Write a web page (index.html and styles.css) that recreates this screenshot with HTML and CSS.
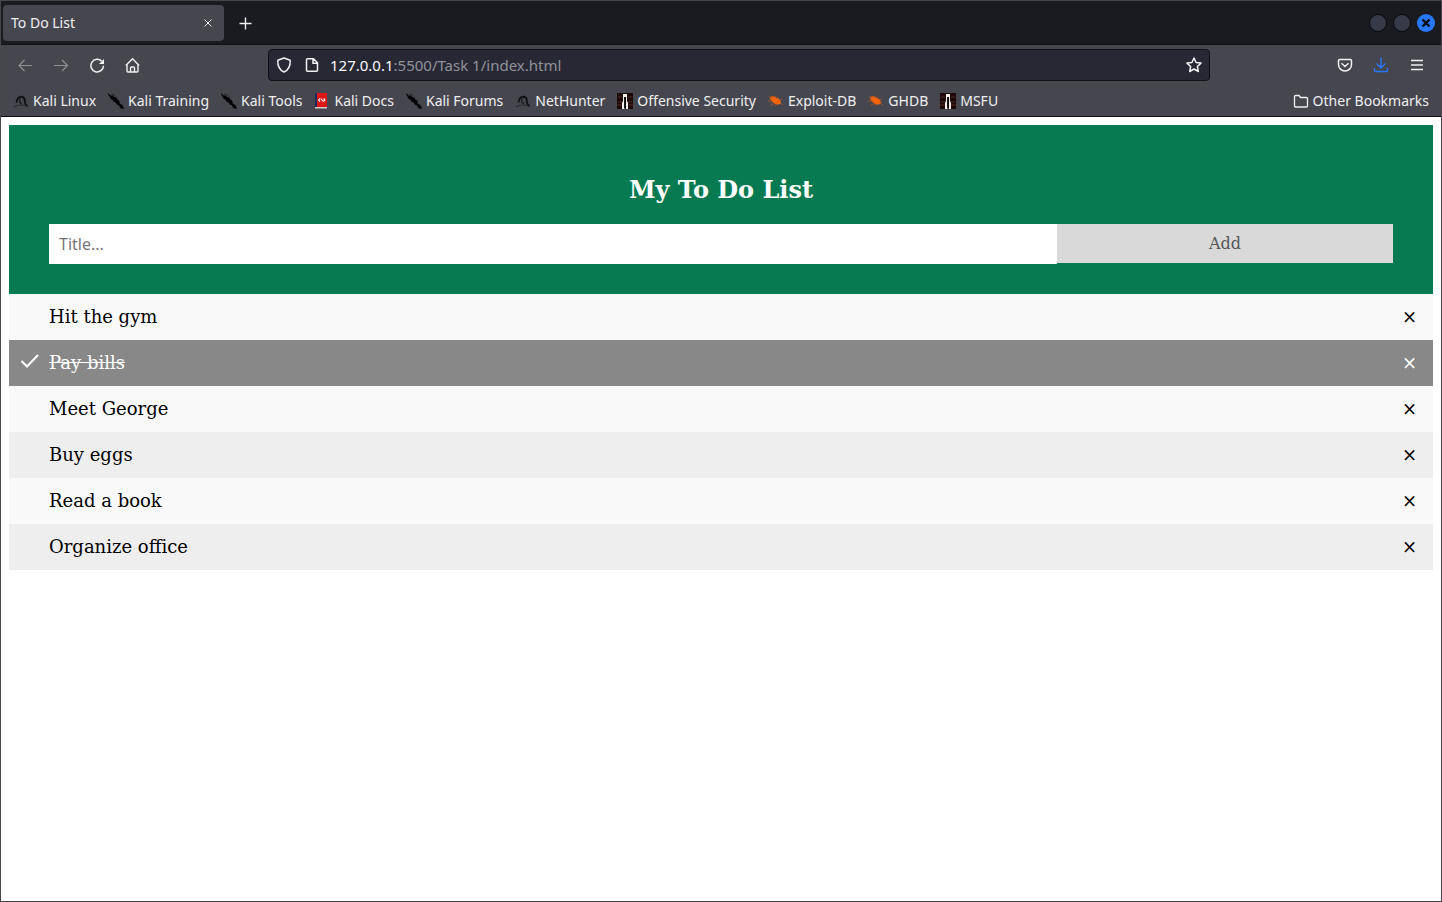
FILE: index.html
```html
<!DOCTYPE html>
<html lang="en">
<head>
<meta charset="utf-8">
<title>To Do List</title>
<link rel="stylesheet" href="styles.css">
</head>
<body>
<svg class="defs" aria-hidden="true">
  <symbol id="dragon" viewBox="0 0 16 16"><path d="M3.500 9.500C4 6 6 3.500 8.500 3.700c2.500.3 3.500 2.500 3.300 5 0 2 .7 3 2.700 4.300" fill="none" stroke="#101114" stroke-width="1.900"/><path d="M7 5.500 6.800 9l2.200 2.500" fill="none" stroke="#17181c" stroke-width="1.300"/><path d="M1 14q3-2 7-2t7 2" fill="none" stroke="#2b2c32" stroke-width="1.200"/></symbol>
  <symbol id="kali" viewBox="0 0 16 16"><path d="m0 .5 3 2.500 2-.5 1 2 2 0 1.500 2.500 1.500.5.500 3 3 2 1.200 3-3.200-.5-1.500-3-2-.5-1.500-2.500-2-.5-.5-2-2-.5-1-2z" fill="#030304" stroke="#030304" stroke-width=".5"/><path d="m3 .8 3.500.7 2 2.500" fill="none" stroke="#222328" stroke-width=".7"/></symbol>
  <symbol id="docs" viewBox="0 0 16 16"><path d="M1 0h12v14H1z" fill="#dc1717"/><path d="M1 0h2v14H1z" fill="#202a58"/><path d="M1 14h12v1.500H1z" fill="#d6cbcb"/><path d="M6.300 5.300 4.500 7l1.500 1.700M9.500 5.300 11 7 9.300 8.700M7 5.800l2 2.400" fill="none" stroke="#fff" stroke-width="1.100"/></symbol>
  <symbol id="offsec" viewBox="0 0 16 16"><path d="M0 0h16v16H0z" fill="#1d0908"/><path d="M1 4h4m6 0h4M1 9h4m6 0h4M0 12h5m6 0h5" stroke="#4c2b29"/><path d="M6 1h4v7l1 2v6H9V4H7.500v12H5v-6l1-2z" fill="#f4efed"/><path d="M7.200 4h1.600v11H7.200z" fill="#000"/></symbol>
  <symbol id="spider" viewBox="0 0 16 16"><path d="M2 4c3-2 5 0 7 1 3 1 4 3 4 5-2 2-5 2-7 0C4 9 2 7 2 4z" fill="#f4640d"/><path d="M5 5 1 4m4 4L0 8m7 2-4 2m6-1-2 2m5-3 3 2M9 5l1-1m2 3 2-1M6 4l2-1" fill="none" stroke="#b85420" stroke-width=".8"/></symbol>
</svg>
<div class="window">
  <header class="chrome">
    <div class="titlebar">
      <div class="tab"><span>To Do List</span><button class="plain tab-close" aria-label="Close tab"><svg viewBox="0 0 16 16"><path d="m4.500 4.500 7 7m0-7-7 7"/></svg></button></div>
      <button class="plain" aria-label="New tab"><svg viewBox="0 0 16 16"><path d="M8.500 2.500v12M2.500 8.500h12" stroke-width="1.400"/></svg></button>
      <div class="controls"><button class="dot" aria-label="Minimize"></button><button class="dot" aria-label="Maximize"></button><button class="dot quit" aria-label="Close"><svg viewBox="0 0 18 18"><path d="m5.500 5.500 7 7m0-7-7 7"/></svg></button></div>
    </div>
    <div class="toolbar">
      <nav class="nav">
        <button class="plain" aria-label="Back" disabled><svg viewBox="0 0 16 16"><path d="M15 8.500H1.500M7.500 3 2 8.500 7.500 14" stroke-width="1.200"/></svg></button>
        <button class="plain" aria-label="Forward" disabled><svg viewBox="0 0 16 16"><path d="M1 8.500h13.500M9 3l5.500 5.500L9 14" stroke-width="1.200"/></svg></button>
        <button class="plain" aria-label="Reload"><svg viewBox="0 0 16 16"><path d="M14.500 8.700A6.300 6.300 0 1 1 12.800 4.300" stroke-width="1.500"/><path d="M15 2v5h-5z" fill="currentColor" stroke="none"/></svg></button>
        <button class="plain" aria-label="Home"><svg viewBox="0 0 16 16"><path d="M.8 8.500 7.500 1.700l6.700 6.800M2 7.500V14q0 1 1 1h9q1 0 1-1V7.500M5.500 15v-4q0-1 1-1h2q1 0 1 1v4" stroke-width="1.400"/></svg></button>
      </nav>
      <div class="address">
        <svg viewBox="0 0 16 16"><path d="m8 1 6.200 2.200C14.500 9 12.500 13 8 15 3.500 13 1.500 9 1.800 3.200z" stroke-width="1.500" stroke-linejoin="round"/></svg>
        <svg class="page-icon" viewBox="0 0 16 16"><path d="M3.500 1.700h6L13.500 5.700v7.600q0 1-1 1h-9q-1 0-1-1V2.700q0-1 1-1zM9 2v4.200h4.300" stroke-width="1.500"/></svg>
        <a class="url" href="#todo"><span class="host">127.0.0.1</span>:5500/Task 1/index.html</a>
        <button class="plain" aria-label="Bookmark this page"><svg viewBox="0 0 16 16"><path d="m8 1 2.100 4.500 4.900.6-3.600 3.400.9 5L8 12l-4.300 2.500.9-5L1 6.100l4.900-.6z" stroke-width="1.500" stroke-linejoin="round"/></svg></button>
      </div>
      <div class="tools">
        <button class="plain" aria-label="Pocket"><svg viewBox="0 0 16 16"><path d="M2.700 2.500h10.600q1.200 0 1.200 1.200V7.500a6.500 6.500 0 0 1-13 0V3.700q0-1.200 1.200-1.200zM4.500 6.300 8 9.500l3.500-3.200" stroke-width="1.500"/></svg></button>
        <button class="plain download" aria-label="Downloads"><svg viewBox="0 0 16 16"><path d="M8 .5V11M3.500 6.500 8 11l4.500-4.500M1.500 11v2.500q0 1 1 1h11q1 0 1-1V11" stroke-width="1.400"/></svg></button>
        <button class="plain" aria-label="Menu"><svg viewBox="0 0 16 16"><path d="M2 3.500h12M2 8h12M2 12.500h12" stroke-width="1.400"/></svg></button>
      </div>
    </div>
    <nav class="bookmarks">
      <a href="#"><svg><use href="#dragon"/></svg>Kali Linux</a>
      <a href="#"><svg><use href="#kali"/></svg>Kali Training</a>
      <a href="#"><svg><use href="#kali"/></svg>Kali Tools</a>
      <a href="#"><svg><use href="#docs"/></svg>Kali Docs</a>
      <a href="#"><svg><use href="#kali"/></svg>Kali Forums</a>
      <a href="#"><svg><use href="#dragon"/></svg>NetHunter</a>
      <a href="#"><svg><use href="#offsec"/></svg>Offensive Security</a>
      <a href="#"><svg><use href="#spider"/></svg>Exploit-DB</a>
      <a href="#"><svg><use href="#spider"/></svg>GHDB</a>
      <a href="#"><svg><use href="#offsec"/></svg>MSFU</a>
      <a class="other" href="#"><svg viewBox="0 0 16 16"><path d="M2.500 2.500H6l1.500 2h6q1 0 1 1V13q0 1-1 1h-11q-1 0-1-1V3.500q0-1 1-1z" stroke-width="1.300"/></svg>Other Bookmarks</a>
    </nav>
  </header>
  <main id="todo">
    <form class="header">
      <h2>My To Do List</h2>
      <div class="entry"><input type="text" placeholder="Title..." aria-label="Title"><button type="button">Add</button></div>
    </form>
    <ul class="list">
      <li><span class="name">Hit the gym</span><button class="close" aria-label="Remove">×</button></li>
      <li class="checked"><svg class="tick" viewBox="0 0 20 16"><path d="m1.500 8 5.500 5.500L18 2"/></svg><span class="name">Pay bills</span><button class="close" aria-label="Remove">×</button></li>
      <li><span class="name">Meet George</span><button class="close" aria-label="Remove">×</button></li>
      <li><span class="name">Buy eggs</span><button class="close" aria-label="Remove">×</button></li>
      <li><span class="name">Read a book</span><button class="close" aria-label="Remove">×</button></li>
      <li><span class="name">Organize office</span><button class="close" aria-label="Remove">×</button></li>
    </ul>
  </main>
</div>
</body>
</html>
```
FILE: styles.css
```css
* { box-sizing: border-box; }
body { margin: 0; font-family: "DejaVu Serif", serif; background: #fff; }
.defs { position: absolute; width: 0; height: 0; }
.window { min-height: 100vh; border: 1px solid #46464a; }
.chrome { background: #46464f; color: #f0f0f1; font: 14px/20px "Noto Sans", sans-serif; border-bottom: 1px solid #0c0c0d; }
.chrome svg { display: block; flex: none; width: 16px; height: 16px; fill: none; stroke: currentColor; }
.chrome use { stroke: none; }
.plain { display: flex; padding: 0; border: 0; background: none; color: inherit; }
.plain:disabled { color: #8f8f94; }
.titlebar { display: flex; align-items: center; gap: 13px; height: 44px; padding: 0 6px 0 2px; background: #1a1b20; border-bottom: 1px solid #101116; }
.tab { display: flex; align-items: center; justify-content: space-between; width: 221px; height: 36px; padding: 0 8px; border-radius: 4px; background: #46464f; }
.controls { display: flex; gap: 6px; margin-left: auto; }
.dot { width: 18px; height: 18px; padding: 0; border: 1px solid #08090d; border-radius: 50%; background: #363a48; }
.quit { border: 0; background: #2777ff; color: #090b10; }
.quit svg { width: 18px; height: 18px; stroke-width: 2.400; }
.toolbar { display: flex; align-items: center; height: 40px; padding: 0 16px; }
.nav { display: flex; gap: 20px; width: 251px; }
.address { display: flex; align-items: center; width: 942px; height: 32px; margin-right: auto; padding: 0 7px; gap: 12px; background: #272834; border: 1px solid #101116; border-radius: 4px; }
.url { flex: 1; margin-left: -2px; color: #92939a; font-size: 15px; text-decoration: none; }
.host { color: #fbfbfe; }
.tools { display: flex; gap: 20px; }
.download { color: #2777ff; }
.bookmarks { display: flex; align-items: center; height: 31px; gap: 12px; padding: 0 12px; }
.bookmarks a { display: flex; align-items: center; gap: 4px; color: inherit; text-decoration: none; white-space: nowrap; }
.bookmarks .other { margin-left: auto; }
main { padding: 8px; }
.header { padding: 50px 40px 30px; background: #087a52; color: #fff; text-align: center; }
h2 { margin: 0 0 20px; font-size: 24px; line-height: 29px; }
.entry { display: flex; align-items: flex-start; }
.entry input { width: 75%; height: 40px; padding: 10px; border: 0; border-radius: 0; font: 16px "Noto Sans", sans-serif; }
.entry input::placeholder { color: #757575; }
.entry button { width: 25%; height: 39px; padding: 0; border: 0; background: #d9d9d9; color: #555; font: 16px "DejaVu Serif", serif; }
.list { margin: 0; padding: 0; list-style: none; }
.list li { position: relative; display: flex; align-items: center; height: 46px; padding-left: 40px; background: #eee; font-size: 18px; line-height: 22px; }
.list li:nth-child(odd) { background: #f9f9f9; }
.list .checked { background: #888; color: #fff; }
.checked .name { text-decoration: line-through; }
.tick { position: absolute; left: 11px; top: 13px; width: 20px; height: 16px; fill: none; stroke: #fff; stroke-width: 2; }
.close { margin-left: auto; width: 47px; height: 46px; padding: 0 0 2px; border: 0; background: none; color: inherit; font: 18px "DejaVu Serif", serif; }
```
